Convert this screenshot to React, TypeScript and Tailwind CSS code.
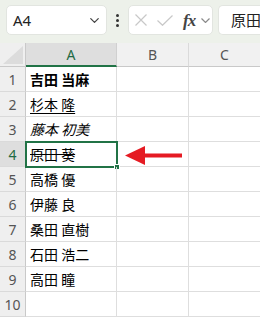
import { ChevronDown } from 'lucide-react';

type Row = {
  n: number;
  text: string;
  style?: string;
};

const rows: Row[] = [
  { n: 1, text: '吉田 当麻', style: 'font-bold' },
  { n: 2, text: '杉本 隆', style: 'underline underline-offset-[3px]' },
  { n: 3, text: '藤本 初美', style: 'italic' },
  { n: 4, text: '原田 葵', style: 'line-through' },
  { n: 5, text: '高橋 優' },
  { n: 6, text: '伊藤 良' },
  { n: 7, text: '桑田 直樹' },
  { n: 8, text: '石田 浩二' },
  { n: 9, text: '高田 瞳' },
  { n: 10, text: '' },
];

const latin = "font-['Noto_Sans',sans-serif]";
const jp = "font-['Noto_Sans_CJK_JP','Noto_Sans',sans-serif]";

const App = () => {
  return (
    <div className="w-[260px] h-[317px] overflow-hidden bg-white relative">
      {/* Formula bar */}
      <div className="h-[43px] bg-[#edf1ea] flex items-start pt-[5px] pl-[6px]">
        <div className="shrink-0 w-[101px] h-[30px] bg-white rounded-[5px] border border-[#e2e5e0] flex items-center justify-between pl-[6px] pr-[4px]">
          <span className={`${latin} text-[15px] text-[#222]`}>A4</span>
          <ChevronDown size={15} strokeWidth={2} className="text-[#444]" />
        </div>
        <div className="shrink-0 w-[21px] h-[30px] flex flex-col items-center justify-center gap-[2px]">
          <div className="w-[3px] h-[3px] rounded-full bg-[#333]" />
          <div className="w-[3px] h-[3px] rounded-full bg-[#333]" />
          <div className="w-[3px] h-[3px] rounded-full bg-[#333]" />
        </div>
        <div className="shrink-0 w-[85px] h-[30px] bg-white rounded-[5px] border border-[#e2e5e0] flex items-center pl-[6px]">
          <svg width="12" height="12" className="shrink-0">
            <path d="M0.5 0.5 L11.5 11.5 M11.5 0.5 L0.5 11.5" stroke="#c8c8c8" strokeWidth="1.2" fill="none" />
          </svg>
          <svg width="16" height="11" className="shrink-0 ml-[10px]">
            <path d="M0.5 5.5 L5.5 10.3 L15.5 0.5" stroke="#c8c8c8" strokeWidth="1.2" fill="none" />
          </svg>
          <span className="font-['Liberation_Serif',serif] italic text-[17px] leading-none text-[#444] font-bold ml-[10px] tracking-[-1px]">fx</span>
          <svg width="9" height="5" className="shrink-0 ml-[6px]">
            <path d="M0.5 0.5 L4.5 4.5 L8.5 0.5" stroke="#8a8a8a" strokeWidth="1.2" fill="none" />
          </svg>
        </div>
        <div className="min-w-0 flex-1 ml-[5px] h-[30px] bg-white rounded-l-[5px] border border-r-0 border-[#e2e5e0] flex items-center pl-[12px] overflow-hidden">
          <span className={`${jp} text-[15px] text-[#222] whitespace-nowrap`}>原田 葵</span>
        </div>
      </div>

      {/* Column headers */}
      <div className="grid grid-cols-[26px_91px_72px_71px] h-[24px]">
        <div className="bg-[#efefef] border-r border-b border-[#c9c9c9] relative">
          <svg width="20" height="18" className="absolute right-[2px] bottom-[2px]">
            <polygon points="20,0 20,18 0,18" fill="#dcdcdc" />
          </svg>
        </div>
        <div className={`${latin} bg-[#dedede] border-r border-[#d0d0d0] border-b-2 border-b-[#217346] flex items-center justify-center text-[14px] text-[#1e6b44]`}>A</div>
        <div className={`${latin} bg-[#f1f1f1] border-r border-[#dadada] border-b border-b-[#c9c9c9] flex items-center justify-center text-[14px] text-[#555]`}>B</div>
        <div className={`${latin} bg-[#f1f1f1] border-b border-[#c9c9c9] flex items-center justify-center text-[14px] text-[#555]`}>C</div>
      </div>

      {/* Rows */}
      {rows.map((row) => {
        const selected = row.n === 4;
        return (
          <div key={row.n} className="grid grid-cols-[26px_91px_72px_71px] h-[25px]">
            <div
              className={`${latin} border-r border-[#c9c9c9] border-b border-b-[#dadada] flex items-center justify-center text-[14px] ${
                selected ? 'bg-[#dedede] text-[#1e6b44]' : 'bg-[#efefef] text-[#555]'
              }`}
            >
              {row.n}
            </div>
            <div className="border-r border-b border-[#dedede] relative flex items-center pl-[4px]">
              <span className={`${jp} text-[14px] text-black whitespace-nowrap ${row.style ?? ''}`}>{row.text}</span>
              {selected && (
                <div className="absolute left-[-1px] top-[-1px] w-[93px] h-[27px] border-2 border-[#217346]">
                  <div className="absolute right-[-4px] bottom-[-4px] w-[6px] h-[6px] bg-[#217346] border border-white" />
                </div>
              )}
            </div>
            <div className="border-r border-b border-[#dedede]" />
            <div className="border-b border-[#dedede]" />
          </div>
        );
      })}

      {/* Red arrow */}
      <svg width="60" height="22" className="absolute left-[124px] top-[145px]">
        <polygon points="1,10.5 21,1 21,20" fill="#e51b23" />
        <rect x="20" y="8.5" width="38" height="4" fill="#e51b23" />
      </svg>
    </div>
  );
};

export default App;
